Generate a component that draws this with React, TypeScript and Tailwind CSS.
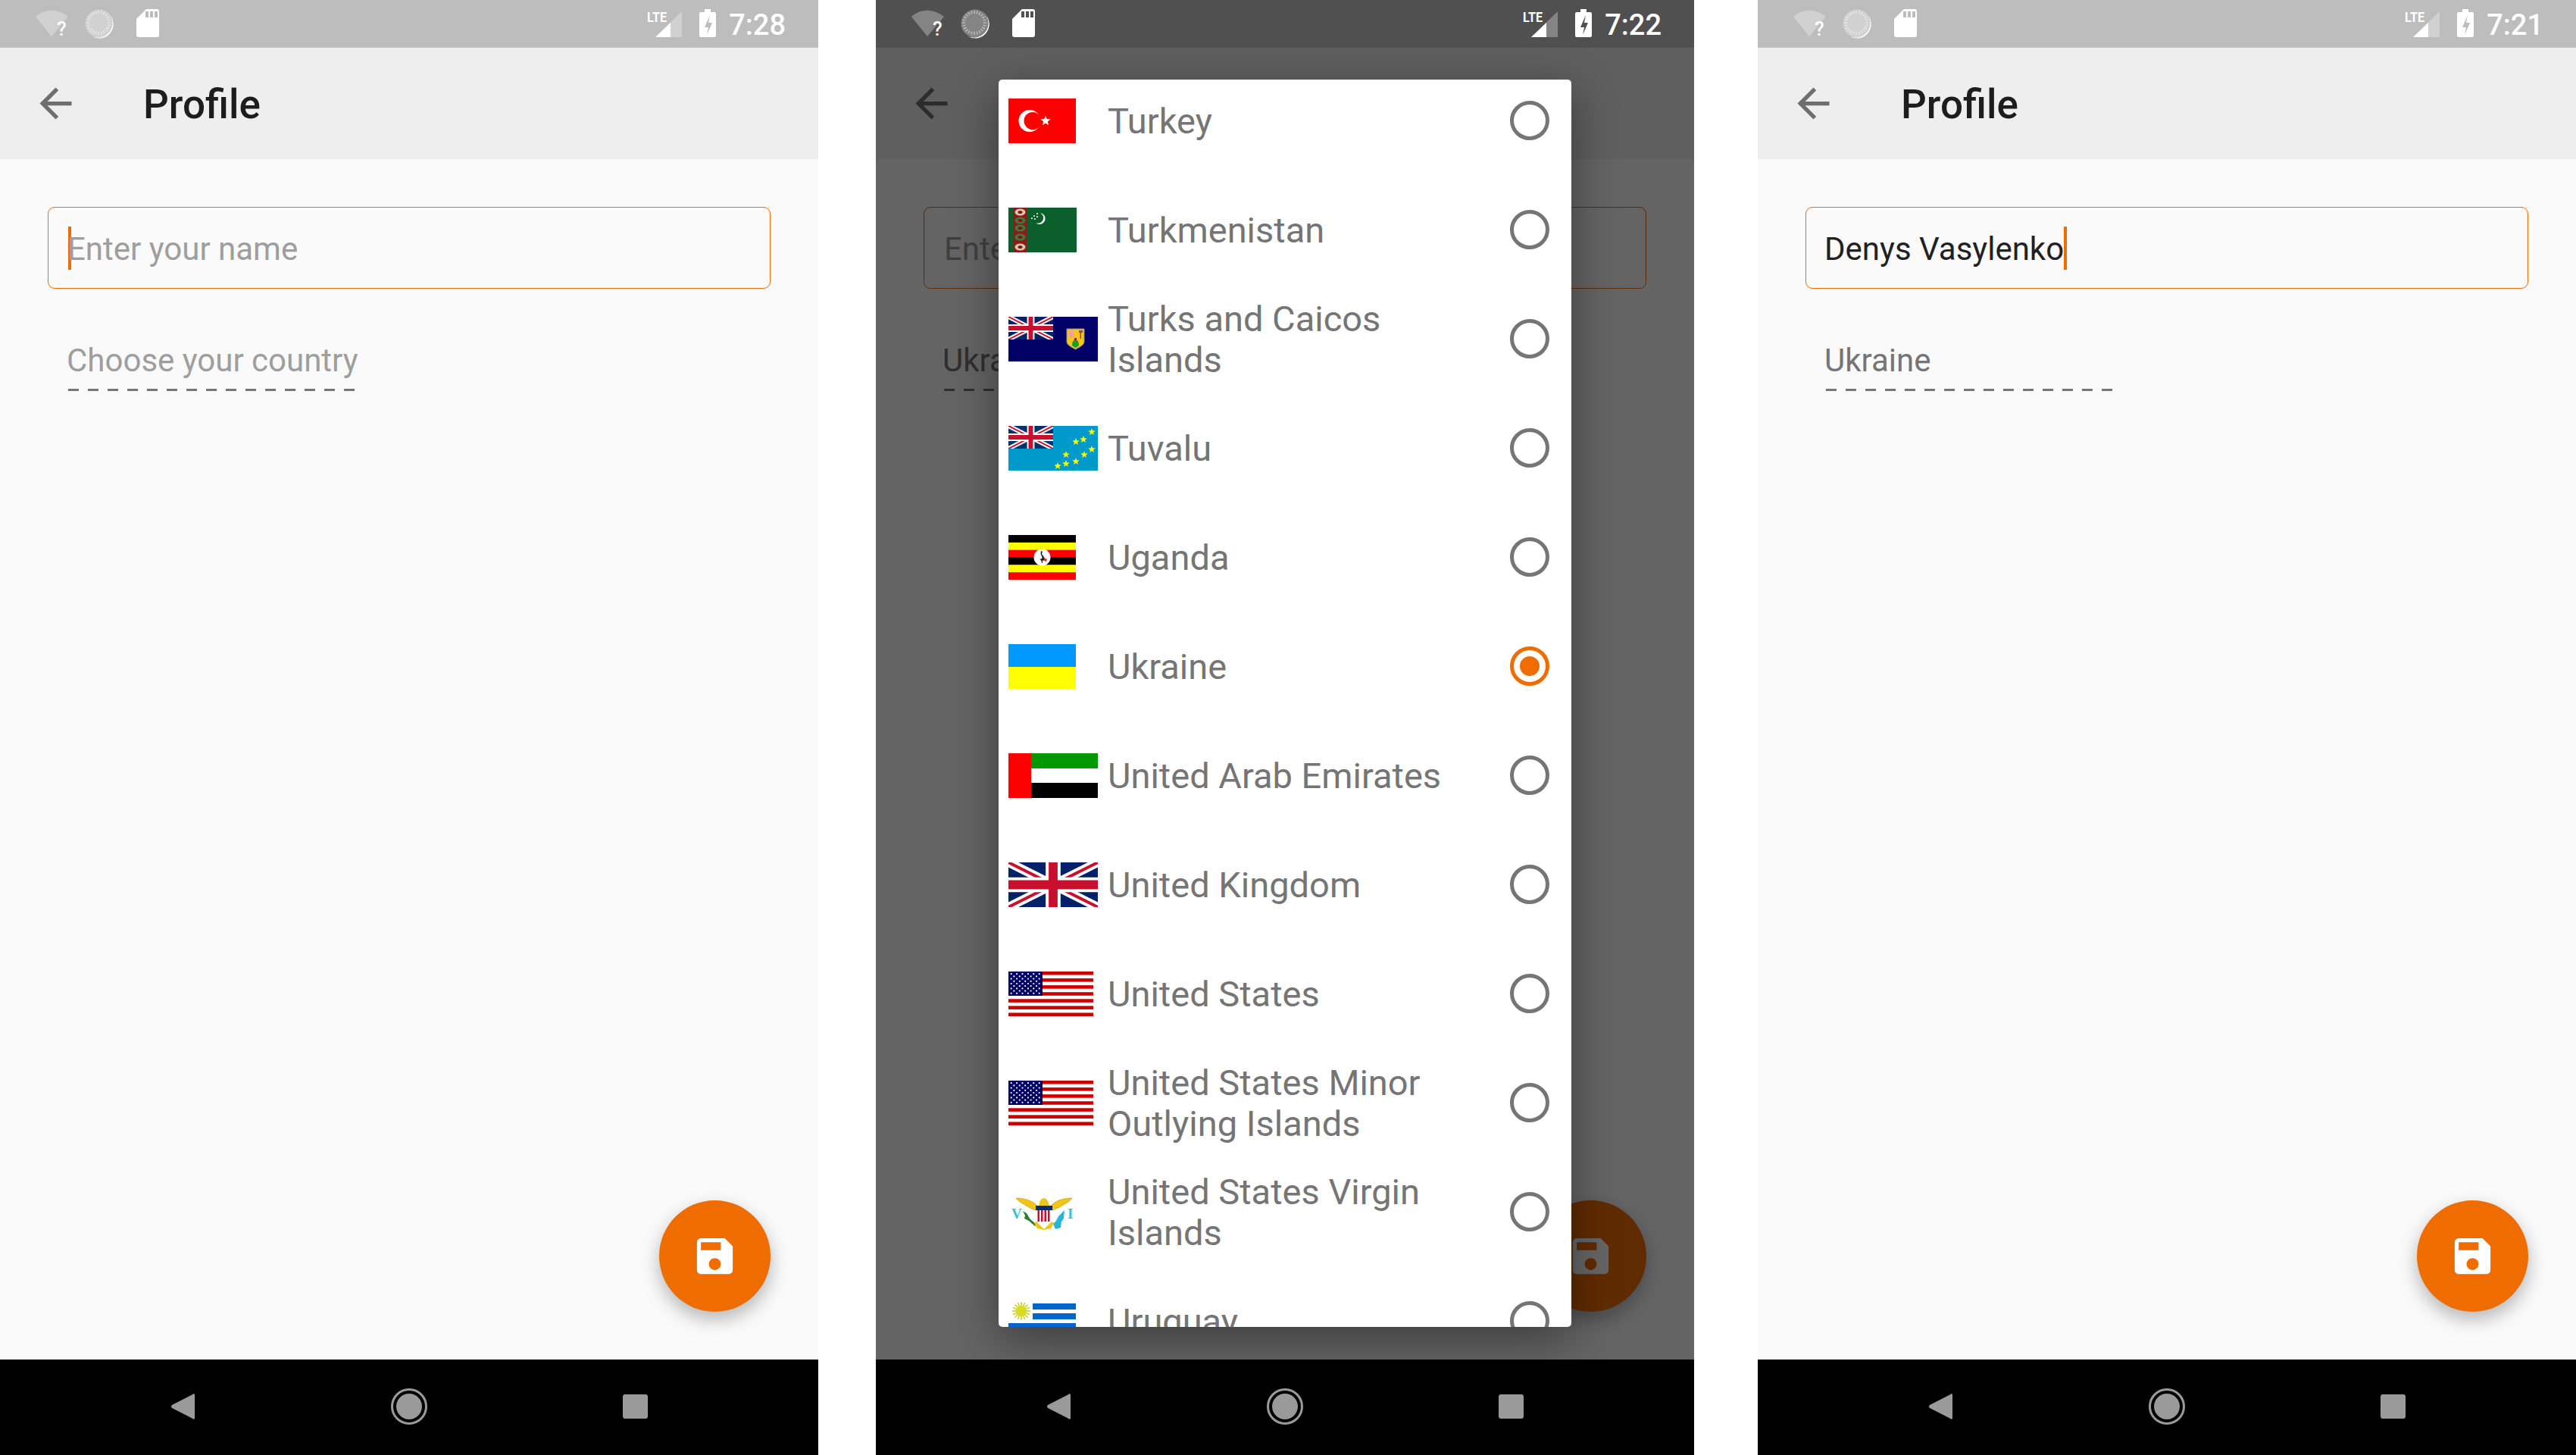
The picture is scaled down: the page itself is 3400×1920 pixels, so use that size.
import type { ReactNode } from 'react'

const FONT = 'h-[1920px] w-[3400px] bg-white [font-family:Roboto,sans-serif]'

function starPoints(cx: number, cy: number, r: number) {
  const pts: string[] = []
  for (let i = 0; i < 10; i++) {
    const rad = i % 2 === 0 ? r : r * 0.42
    const a = (Math.PI / 5) * i - Math.PI / 2
    pts.push(`${cx + rad * Math.cos(a)},${cy + rad * Math.sin(a)}`)
  }
  return pts.join(' ')
}

function Jack({ w, h, blue = '#012169', red = '#c8102e' }: { w: number; h: number; blue?: string; red?: string }) {
  return (
    <svg x={0} y={0} width={w} height={h} viewBox="0 0 60 30" preserveAspectRatio="none">
      <rect width="60" height="30" fill={blue} />
      <path d="M0 0L60 30M60 0L0 30" stroke="#fff" strokeWidth="6" />
      <path d="M0 0L60 30M60 0L0 30" stroke={red} strokeWidth="2" />
      <path d="M30 0V30M0 15H60" stroke="#fff" strokeWidth="10" />
      <path d="M30 0V30M0 15H60" stroke={red} strokeWidth="6" />
    </svg>
  )
}

function FlagBox({ w, children }: { w: number; children: ReactNode }) {
  return (
    <svg width={w} height={59} viewBox={`0 0 ${w} 59`} className="block">
      {children}
    </svg>
  )
}

const Turkey = () => (
  <FlagBox w={89}>
    <rect width="89" height="59" fill="#ff0000" />
    <circle cx="28" cy="29.5" r="14.5" fill="#fff" />
    <circle cx="32" cy="29.5" r="11.5" fill="#ff0000" />
    <polygon points={starPoints(49, 29.5, 7)} fill="#fff" />
  </FlagBox>
)

const Turkmenistan = () => (
  <FlagBox w={90}>
    <rect width="90" height="59" fill="#0a5f2a" />
    <rect x="7" width="17" height="59" fill="#8e1a1e" />
    {[6, 17, 27, 39, 52].map((y) => (
      <g key={y}>
        <ellipse cx="15.5" cy={y} rx="7" ry="4.5" fill={y === 6 || y === 52 ? '#d8c8a8' : '#3f7a3a'} />
        <ellipse cx="15.5" cy={y} rx="3" ry="2" fill="#7a1a1a" />
      </g>
    ))}
    <path d="M42 7a7.5 7.5 0 1 1-6 13a6.5 6.5 0 0 0 6-13z" fill="#fff" />
    {[
      [31, 14],
      [34, 11],
      [35, 15],
      [38, 8],
      [38, 12],
    ].map(([x, y]) => (
      <circle key={`${x}-${y}`} cx={x} cy={y} r="1" fill="#fff" />
    ))}
  </FlagBox>
)

const TurksCaicos = () => (
  <FlagBox w={118}>
    <rect width="118" height="59" fill="#000066" />
    <Jack w={59} h={30} />
    <path d="M77 16h23v17c0 4-6 7-11.500 10c-5.500-3-11.500-6-11.500-10z" fill="#f5c518" stroke="#8888bb" strokeWidth="1" />
    <ellipse cx="83" cy="23" rx="3.500" ry="5" fill="#f0a0a0" />
    <path d="M93 18h5v3h-2v8h-1.500v-8h-1.500z" fill="#8a5a1a" />
    <path d="M84 38c0-5 2-8 4.500-8s4.500 3 4.500 8l-4.500 3z" fill="#1e9a2e" />
    <rect x="87" y="28" width="3" height="3" fill="#b02020" />
  </FlagBox>
)

const Tuvalu = () => (
  <FlagBox w={118}>
    <rect width="118" height="59" fill="#0099cc" />
    <Jack w={59} h={30} blue="#00326e" />
    {[
      [110, 8],
      [89, 21],
      [99, 18],
      [110, 31],
      [100, 38],
      [76, 38],
      [89, 47],
      [76, 50],
      [65, 53],
    ].map(([x, y]) => (
      <polygon key={`${x}-${y}`} points={starPoints(x, y, 5)} fill="#ffff00" />
    ))}
  </FlagBox>
)

const Uganda = () => (
  <FlagBox w={89}>
    {['#000', '#ffff00', '#ff0000', '#000', '#ffff00', '#ff0000'].map((c, i) => (
      <rect key={i} y={(i * 59) / 6} width="89" height={59 / 6 + 0.5} fill={c} />
    ))}
    <circle cx="44.500" cy="29.500" r="11" fill="#fff" />
    <path d="M43 21l2 1-1 3 3 4 1 4-3 1v3h-1l-.5-3-2-2 1.500-1 1 1 .5-3-2-4z" fill="#222" />
    <path d="M47 30l4 2-1 3-3-1z" fill="#d9381e" />
  </FlagBox>
)

const Ukraine = () => (
  <FlagBox w={89}>
    <rect width="89" height="30" fill="#0099ff" />
    <rect y="30" width="89" height="29" fill="#ffff00" />
  </FlagBox>
)

const Uae = () => (
  <FlagBox w={118}>
    <rect x="30" width="88" height="20" fill="#009900" />
    <rect x="30" y="20" width="88" height="19" fill="#fff" />
    <rect x="30" y="39" width="88" height="20" fill="#000" />
    <rect width="30" height="59" fill="#ff0000" />
  </FlagBox>
)

const Uk = () => (
  <FlagBox w={118}>
    <Jack w={118} h={59} />
  </FlagBox>
)

const Usa = () => (
  <FlagBox w={112}>
    <rect width="112" height="59" fill="#fff" />
    {Array.from({ length: 7 }).map((_, i) => (
      <rect key={i} y={(i * 2 * 59) / 13} width="112" height={59 / 13} fill="#cc0000" />
    ))}
    <rect width="45" height="32" fill="#000066" />
    {Array.from({ length: 9 }).map((_, r) =>
      Array.from({ length: r % 2 === 0 ? 6 : 5 }).map((_, c) => (
        <circle
          key={`${r}-${c}`}
          cx={(r % 2 === 0 ? 3.700 : 7.400) + c * 7.400}
          cy={3.200 + r * 3.200}
          r="1.100"
          fill="#fff"
        />
      )),
    )}
  </FlagBox>
)

const VirginIslands = () => (
  <FlagBox w={118}>
    <rect width="118" height="59" fill="#fff" />
    <text x="4" y="38" fontSize="19" fontFamily="Liberation Serif" fontWeight="700" fill="#2ec4d6">
      V
    </text>
    <text x="78" y="38" fontSize="19" fontFamily="Liberation Serif" fontWeight="700" fill="#2ec4d6">
      I
    </text>
    <path d="M10 11c9 0 20 2 27 9l1 8c-6-2-12-5-18-9c-4-2-8-5-10-8z" fill="#f2c414" stroke="#b08a10" strokeWidth="0.500" />
    <path d="M84 11c-9 0-20 2-27 9l-1 8c6-2 12-5 18-9c4-2 8-5 10-8z" fill="#f2c414" stroke="#b08a10" strokeWidth="0.500" />
    <path d="M40 21c1-6 3-10 7-10c3 0 5 3 7 10z" fill="#f2c414" />
    <path d="M19 28l5 3 4 7 9 8-2 2-8-7-6-3 1-4z" fill="#2e7d32" />
    <path d="M74 27l-8 8-3 6-4 4 3 7 7-2 1-8 3-4z" fill="#29b6d6" />
    <path d="M37 42l10 10 10-10 3 2-4 7-9 2-9-2-4-7z" fill="#f2c414" />
    <rect x="36" y="21" width="22" height="6" fill="#0a2a6a" />
    <path d="M36 27h22v8c0 4-5 6-11 9c-6-3-11-5-11-9z" fill="#fff" />
    {[38.500, 43, 47.500, 52].map((x) => (
      <rect key={x} x={x} y="27" width="2.500" height="15" fill="#c8102e" />
    ))}
  </FlagBox>
)

const Uruguay = () => (
  <FlagBox w={89}>
    <rect width="89" height="59" fill="#fff" />
    {[6, 19, 32].map((y) => (
      <rect key={y} x={y === 32 ? 0 : 32} y={y} width={y === 32 ? 89 : 57} height="8" fill="#0066cc" />
    ))}
    {Array.from({ length: 16 }).map((_, i) => {
      const a = (i * Math.PI) / 8
      return (
        <line
          key={i}
          x1={17}
          y1={16}
          x2={17 + 12 * Math.cos(a)}
          y2={16 + 12 * Math.sin(a)}
          stroke="#c9cc1a"
          strokeWidth="1.500"
        />
      )
    })}
    <circle cx="17" cy="16" r="7" fill="#d8dc1c" />
  </FlagBox>
)

const countries: { name: string; flag: ReactNode; selected?: boolean }[] = [
  { name: 'Turkey', flag: <Turkey /> },
  { name: 'Turkmenistan', flag: <Turkmenistan /> },
  { name: 'Turks and Caicos Islands', flag: <TurksCaicos /> },
  { name: 'Tuvalu', flag: <Tuvalu /> },
  { name: 'Uganda', flag: <Uganda /> },
  { name: 'Ukraine', flag: <Ukraine />, selected: true },
  { name: 'United Arab Emirates', flag: <Uae /> },
  { name: 'United Kingdom', flag: <Uk /> },
  { name: 'United States', flag: <Usa /> },
  { name: 'United States Minor Outlying Islands', flag: <Usa /> },
  { name: 'United States Virgin Islands', flag: <VirginIslands /> },
  { name: 'Uruguay', flag: <Uruguay /> },
]

function StatusBar({ time, dim }: { time: string; dim?: boolean }) {
  const bg = dim ? 'bg-[#505050]' : 'bg-[#bdbdbd]'
  return (
    <div className={`flex h-[63px] items-stretch ${bg}`}>
      {/* wifi + ? */}
      <svg width="46" height="63" viewBox="46 0 46 63" className="ml-[46px]">
        <path d="M47 22C59 11 76 11 90 22L68 48z" fill="#fff" fillOpacity="0.3" />
        <text x="75" y="47" fontSize="26" fontWeight="500" fill="#fff" fontFamily="Roboto">
          ?
        </text>
      </svg>
      {/* sync dial */}
      <svg width="40" height="63" viewBox="111 0 40 63" className="ml-[19px]">
        <path d="M131 12.500a18.500 18.500 0 1 1 0 37a18.500 18.500 0 0 1 0-37z" fill="#fff" fillOpacity="0.3" />
        {Array.from({ length: 24 }).map((_, i) => {
          const a = (i * Math.PI) / 12
          return (
            <line
              key={i}
              x1={130 + 12 * Math.cos(a)}
              y1={30 + 12 * Math.sin(a)}
              x2={130 + 16 * Math.cos(a)}
              y2={30 + 16 * Math.sin(a)}
              stroke="#fff"
              strokeOpacity="0.45"
              strokeWidth="1.500"
            />
          )
        })}
        <path d="M146 21a18.500 18.500 0 0 1-25 26.500a19 19 0 0 0 25-26.500z" fill="#fff" />
      </svg>
      {/* sd card */}
      <svg width="32" height="63" viewBox="178 0 32 63" className="ml-[28px]">
        <path d="M192 12h14a3 3 0 0 1 3 3v31a3 3 0 0 1-3 3h-24a3 3 0 0 1-3-3V25z" fill="#fff" />
        <rect x="191" y="15" width="4" height="8" fill={dim ? '#505050' : '#bdbdbd'} />
        <rect x="197" y="15" width="4" height="8" fill={dim ? '#505050' : '#bdbdbd'} />
        <rect x="203" y="15" width="4" height="8" fill={dim ? '#505050' : '#bdbdbd'} />
      </svg>
      <div className="flex-1" />
      {/* LTE + signal */}
      <svg width="48" height="63" viewBox="853 0 48 63">
        <text x="854" y="29" fontSize="18" fontWeight="700" fill="#fff" fontFamily="Roboto" textLength="26" lengthAdjust="spacingAndGlyphs">
          LTE
        </text>
        <path d="M865 49L900 15V49z" fill="#fff" fillOpacity="0.3" />
        <path d="M865 49L885 30V49z" fill="#fff" />
      </svg>
      {/* battery */}
      <svg width="22" height="63" viewBox="923 0 22 63" className="ml-[22px]">
        <path d="M930 12h8v4h5a2 2 0 0 1 2 2v29a2 2 0 0 1-2 2h-18a2 2 0 0 1-2-2V18a2 2 0 0 1 2-2h5z" fill="#fff" />
        <path d="M937 20l-7 16h5l-2 10 7-16h-5z" fill={dim ? '#505050' : '#bdbdbd'} />
      </svg>
      <span className="ml-[21px] mr-[43px] flex w-[71px] items-center justify-end pt-[2px] text-[38px] leading-none font-medium text-white">
        {time}
      </span>
    </div>
  )
}

function NavBar() {
  return (
    <div className="flex h-[126px] items-center bg-black pl-[226px] pb-[2px]">
      <svg width="31" height="36" viewBox="0 0 31 36" className="block">
        <path d="M29 1.500c1-.5 2 .2 2 1.500v30c0 1.300-1 2-2 1.500c-.5-.2-1-.6-1.500-1.100L1 20c-1.300-1.200-1.300-2.800 0-4L27.500 2.600c.5-.5 1-.9 1.500-1.100z" fill="#9a9a9a" />
      </svg>
      <div className="ml-[259px] flex h-[48px] w-[48px] items-center justify-center rounded-full border-[3px] border-[#9a9a9a]">
        <div className="h-[34px] w-[34px] rounded-full bg-[#9a9a9a]" />
      </div>
      <div className="ml-[258px] h-[32px] w-[33px] rounded-[3px] bg-[#9a9a9a]" />
    </div>
  )
}

function Dashes() {
  return (
    <div className="mt-[14px] flex gap-[12px]">
      {Array.from({ length: 15 }).map((_, i) => (
        <span key={i} className="h-[3px] w-[14px] shrink-0 bg-[#757575]" />
      ))}
    </div>
  )
}

function Phone({
  time,
  name,
  country,
  dialog,
}: {
  time: string
  name?: string
  country?: string
  dialog?: boolean
}) {
  return (
    <div className="relative flex h-[1920px] w-[1080px] flex-col">
      <StatusBar time={time} dim={dialog} />
      <div className="relative flex flex-1 flex-col bg-[#fafafa]">
        <header className="flex h-[147px] items-center bg-[#eeeeee] pl-[42px]">
          <svg width="63" height="63" viewBox="0 0 24 24" fill="#6e6e6e" className="block">
            <path d="M20 11H7.830l5.590-5.590L12 4l-8 8 8 8 1.410-1.410L7.830 13H20v-2z" />
          </svg>
          <h1 className="ml-[84px] pt-[3px] text-[53px] leading-none font-medium text-[#1d1d1d]">Profile</h1>
        </header>

        <div className="flex flex-col px-[63px] pt-[63px]">
          <div className={`flex h-[108px] items-center rounded-[9px] border border-[#ef6c00] ${name ? 'pl-[24px]' : 'pl-[26px]'}`}>
            {!name && !dialog && <span className="h-[57px] w-[4px] bg-[#ef6c00]" />}
            {name ? (
              <>
                <span className="pt-[3px] text-[42px] leading-none text-[#212121]">{name}</span>
                <span className="h-[57px] w-[4px] bg-[#ef6c00]" />
              </>
            ) : (
              <span className={`pt-[3px] text-[42px] leading-none text-[#9e9e9e] ${dialog ? '' : '-ml-[5px]'}`}>
                Enter your name
              </span>
            )}
          </div>
          <div className="mt-[70px] flex w-[440px] flex-col pl-[27px]">
            <span
              className={`-ml-[2px] h-[48px] whitespace-nowrap text-[42px] leading-[50px] ${country ? 'text-[#757575]' : 'text-[#9e9e9e]'}`}
            >
              {country ?? 'Choose your country'}
            </span>
            <Dashes />
          </div>
        </div>

        {/* FAB */}
        <button className="absolute right-[63px] bottom-[63px] flex h-[147px] w-[147px] items-center justify-center rounded-full bg-[#ef6c00] shadow-[0_10px_24px_rgba(0,0,0,0.28)]">
          <svg width="63" height="63" viewBox="0 0 24 24" fill="#fff">
            <path d="M17 3H5c-1.110 0-2 .9-2 2v14c0 1.100.89 2 2 2h14c1.100 0 2-.9 2-2V7l-4-4zm-5 16c-1.660 0-3-1.340-3-3s1.340-3 3-3 3 1.340 3 3-1.340 3-3 3zm3-10H5V5h10v4z" />
          </svg>
        </button>

        {dialog && <div className="absolute inset-0 bg-black/60" />}
      </div>
      <NavBar />

      {dialog && (
        <div className="absolute top-[105px] left-[162px] h-[1646px] w-[756px] overflow-hidden rounded-[5px] bg-white shadow-[0_16px_60px_rgba(0,0,0,0.4)]">
          <div className="-mt-[18px] flex flex-col">
            {countries.map((c) => (
              <div key={c.name} className="flex h-[144px] shrink-0 items-center pr-[29px] pl-[13px]">
                <div className="w-[131px] shrink-0">{c.flag}</div>
                <span className="w-[480px] pt-[1px] text-[47px] leading-[54px] text-[#757575]">{c.name}</span>
                <div className="flex-1" />
                {c.selected ? (
                  <div className="flex h-[52px] w-[52px] items-center justify-center rounded-full border-[5px] border-[#ef6c00]">
                    <div className="h-[26px] w-[26px] rounded-full bg-[#ef6c00]" />
                  </div>
                ) : (
                  <div className="h-[52px] w-[52px] rounded-full border-[5px] border-[#757575]" />
                )}
              </div>
            ))}
          </div>
        </div>
      )}
    </div>
  )
}

export default function App() {
  return (
    <div className={`flex ${FONT}`}>
      <Phone time="7:28" />
      <div className="ml-[76px]">
        <Phone time="7:22" country="Ukraine" dialog />
      </div>
      <div className="ml-[84px]">
        <Phone time="7:21" name="Denys Vasylenko" country="Ukraine" />
      </div>
    </div>
  )
}
